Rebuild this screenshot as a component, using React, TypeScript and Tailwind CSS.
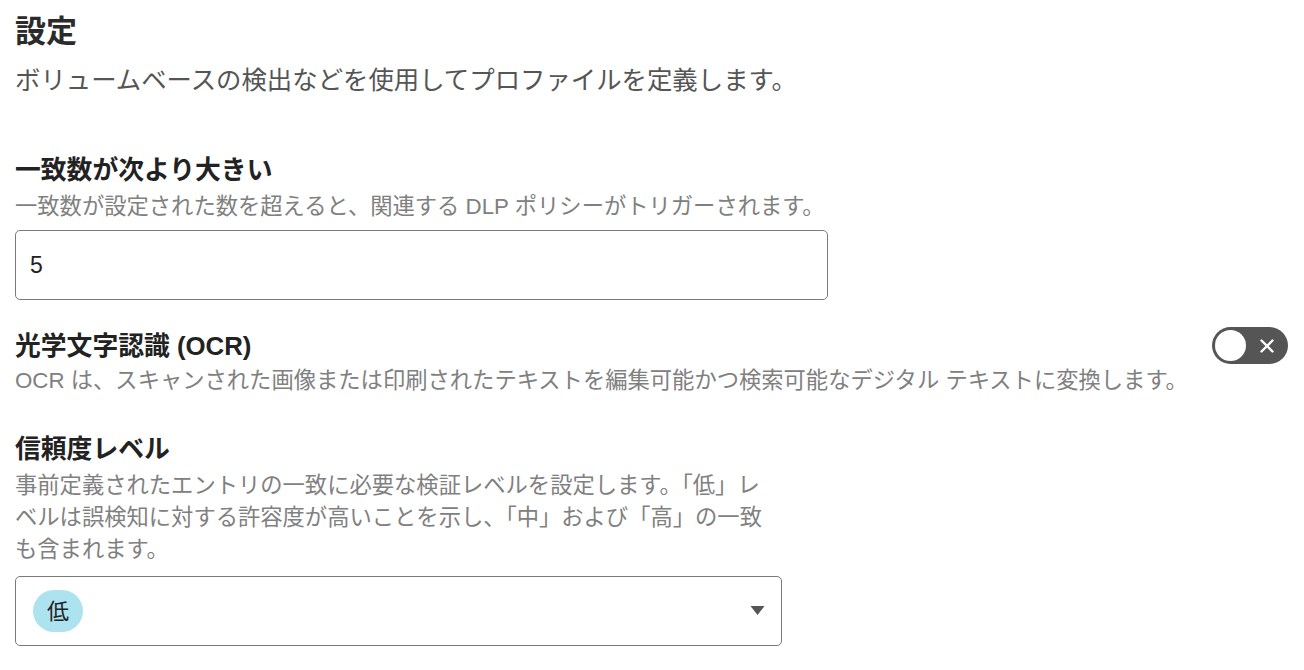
import React, { useState } from 'react';

const FONT = '"Liberation Sans", "Noto Sans CJK JP", sans-serif';

export default function App() {
  const [count, setCount] = useState('5');
  const [ocr, setOcr] = useState(false);

  return (
    <div className="w-[1304px] h-[670px] bg-white overflow-hidden pl-[15px] pr-[16px]" style={{ fontFamily: FONT }}>
      {/* 見出し */}
      <h1 className="pt-[12px] text-[31px] leading-[40px] font-bold text-[#2b2b2b]">設定</h1>
      <p className="mt-[12px] text-[25.4px] leading-[32px] text-[#555]">
        ボリュームベースの検出などを使用してプロファイルを定義します。
      </p>

      {/* 一致数 */}
      <div className="mt-[56px] w-[813px]">
        <h2 className="text-[25.8px] leading-[36px] font-bold text-[#222]">一致数が次より大きい</h2>
        <p className="mt-[3px] text-[22.3px] leading-[32px] text-[#808080]">
          一致数が設定された数を超えると、関連する DLP ポリシーがトリガーされます。
        </p>
        <input
          type="text"
          value={count}
          onChange={e => setCount(e.target.value)}
          className="mt-[7px] w-full h-[70px] border border-[#7a7a7a] rounded-[5px] px-[14px] text-[23px] text-[#222] outline-none"
          style={{ fontFamily: FONT }}
        />
      </div>

      {/* OCR */}
      <div className="mt-[28px] flex justify-between items-start">
        <div>
          <h2 className="text-[25.8px] leading-[36px] font-bold text-[#222]">光学文字認識 (OCR)</h2>
          <p className="mt-[1px] text-[22.3px] leading-[32px] text-[#808080]">
            OCR は、スキャンされた画像または印刷されたテキストを編集可能かつ検索可能なデジタル テキストに変換します。
          </p>
        </div>
        <button
          type="button"
          onClick={() => setOcr(!ocr)}
          className="mt-[-1px] w-[76px] h-[37px] rounded-full bg-[#555] flex items-center px-[3px] shrink-0"
        >
          <span className="w-[31px] h-[31px] rounded-full bg-white block" />
          <svg viewBox="0 0 24 24" className="w-[22px] h-[22px] ml-[10px]" fill="none" stroke="white" strokeWidth="2.6" strokeLinecap="round">
            <path d="M6 6l12 12M18 6L6 18" />
          </svg>
        </button>
      </div>

      {/* 信頼度レベル */}
      <div className="mt-[34px] w-[767px]">
        <h2 className="text-[25.8px] leading-[36px] font-bold text-[#222]">信頼度レベル</h2>
        <p className="mt-[3px] w-[765px] text-[22.3px] leading-[32px] text-[#808080]">
          事前定義されたエントリの一致に必要な検証レベルを設定します。「低」レベルは誤検知に対する許容度が高いことを示し、「中」および「高」の一致も含まれます。
        </p>
        <div className="mt-[10px] h-[70px] border border-[#7a7a7a] rounded-[5px] pl-[17px] pr-[16px] flex items-center justify-between">
          <span className="w-[50px] h-[42px] rounded-full bg-[#ade3ef] flex items-center justify-center text-[22px] text-[#222]">低</span>
          <svg viewBox="0 0 14 10" className="w-[15px] h-[10px]" fill="#555">
            <path d="M0 0h14L7 9z" />
          </svg>
        </div>
      </div>
    </div>
  );
}
